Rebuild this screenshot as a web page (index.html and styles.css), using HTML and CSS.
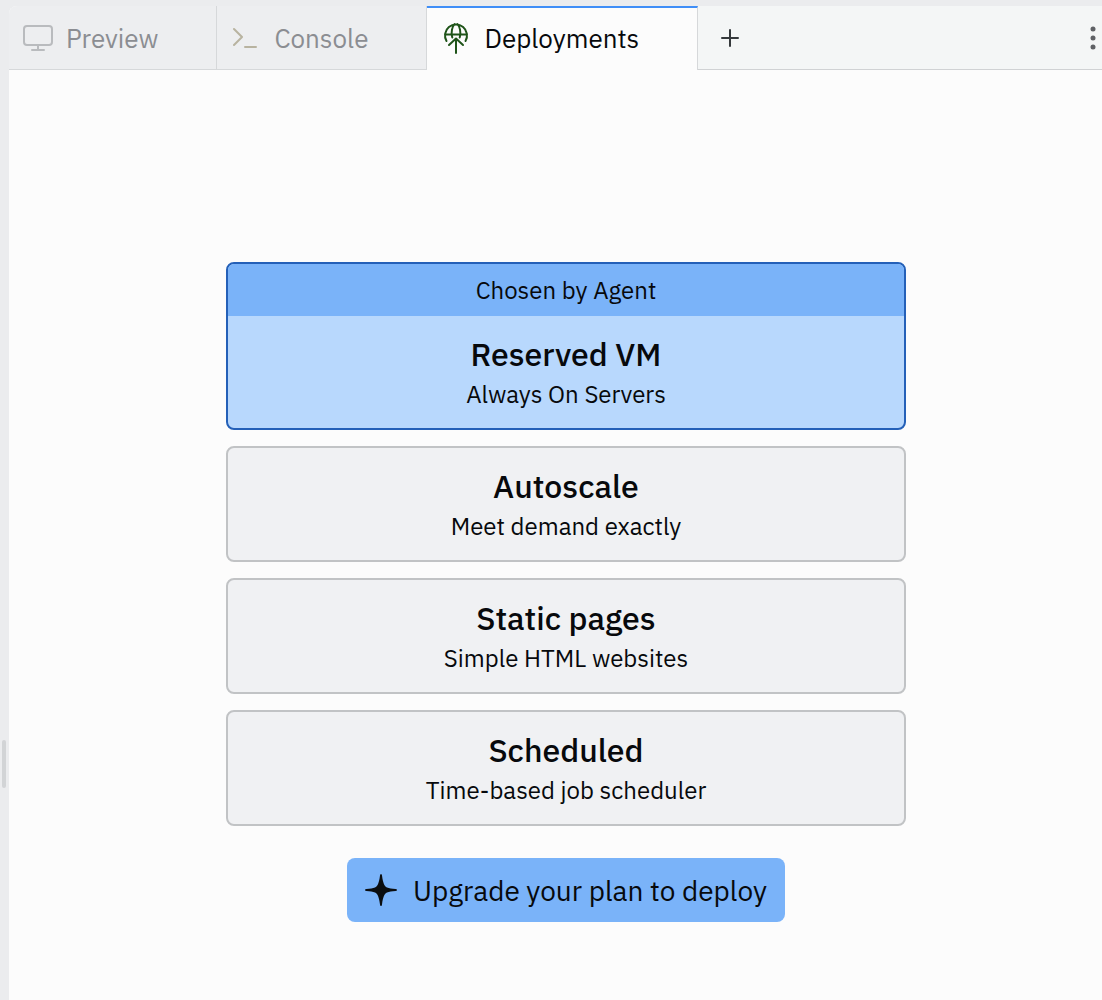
FILE: index.html
```html
<!DOCTYPE html>
<html lang="en">
<head>
<meta charset="utf-8">
<meta name="viewport" content="width=device-width, initial-scale=1">
<title>Deployments</title>
<link rel="stylesheet" href="styles.css">
</head>
<body>
<div class="workspace">
  <div class="resizer"><span class="resizer-grip"></span></div>
  <div class="pane">
    <nav class="tabs" aria-label="Panes">
      <button class="tab tab-preview" type="button">
        <svg class="tab-icon" width="32" height="32" viewBox="0 0 32 32" fill="none" stroke="#b9bbbe" stroke-width="2" stroke-linecap="round" stroke-linejoin="round" aria-hidden="true"><rect x="2" y="4" width="28" height="19" rx="3"/><path d="M16 23v5M10 28h12"/></svg>
        <span>Preview</span>
      </button>
      <button class="tab" type="button">
        <svg class="tab-icon" width="32" height="32" viewBox="0 0 32 32" fill="none" stroke="#b8b3a0" stroke-width="2" stroke-linecap="round" stroke-linejoin="round" aria-hidden="true"><path d="M4 7l8 8-8 8M15 25h11"/></svg>
        <span>Console</span>
      </button>
      <button class="tab tab-active" type="button" aria-current="page">
        <svg class="tab-icon" width="32" height="32" viewBox="0 0 32 32" fill="none" stroke="#1f5419" stroke-width="2" stroke-linecap="round" stroke-linejoin="round" aria-hidden="true"><path d="M6.500 19A11 11 0 1 1 25.500 19M5 12.500h22M12.300 15.500C10.500 10 12.500 4.500 14.500 2M19.700 15.500C21.500 10 19.500 4.500 17.500 2M16 31V17M9 23l7-6.500 7 6.500"/></svg>
        <span>Deployments</span>
      </button>
      <button class="tool" type="button" aria-label="New tab">
        <svg width="20" height="20" viewBox="0 0 20 20" stroke="#35393c" stroke-width="2" stroke-linecap="round" aria-hidden="true"><path d="M2 10h16M10 2v16"/></svg>
      </button>
      <button class="tool tool-more" type="button" aria-label="More options">
        <svg width="6" height="26" viewBox="0 0 6 26" fill="#5f6165" aria-hidden="true"><circle cx="3" cy="4" r="2.500"/><circle cx="3" cy="13" r="2.500"/><circle cx="3" cy="22" r="2.500"/></svg>
      </button>
    </nav>
    <main class="deploy">
      <div class="options">
        <button class="option option-chosen" type="button">
          <span class="badge">Chosen by Agent</span>
          <span class="option-body"><strong class="option-title">Reserved VM</strong><span class="option-text">Always On Servers</span></span>
        </button>
        <button class="option" type="button">
          <span class="option-body"><strong class="option-title">Autoscale</strong><span class="option-text">Meet demand exactly</span></span>
        </button>
        <button class="option" type="button">
          <span class="option-body"><strong class="option-title">Static pages</strong><span class="option-text">Simple HTML websites</span></span>
        </button>
        <button class="option" type="button">
          <span class="option-body"><strong class="option-title">Scheduled</strong><span class="option-text">Time-based job scheduler</span></span>
        </button>
      </div>
      <button class="upgrade" type="button">
        <svg width="32" height="32" viewBox="0 0 32 32" fill="#0a0d10" aria-hidden="true"><path d="M16 0q.900 0 1 1.500C18 9 19.500 12.500 22 13.500C24 14.500 27 14.700 30.500 15q1.500.200 1.500 1t-1.500 1C27 17.300 24 17.500 22 18.500C19.500 19.500 18 23 17 30.500q-.100 1.500-1 1.500t-1-1.500C14 23 12.500 19.500 10 18.500C8 17.500 5 17.300 1.500 17Q0 16.800 0 16t1.500-1C5 14.700 8 14.500 10 13.500C12.500 12.500 14 9 15 1.500Q15.100 0 16 0z"/></svg>
        <span>Upgrade your plan to deploy</span>
      </button>
    </main>
  </div>
</div>
</body>
</html>
```
FILE: styles.css
```css
* {
  box-sizing: border-box;
}

body {
  margin: 0;
  background: #ebecee;
  color: #07090c;
  font-family: "IBM Plex Sans", Roboto, sans-serif;
}

button {
  border: 0;
  padding: 0;
  color: inherit;
  font: inherit;
  cursor: pointer;
}

.workspace {
  display: flex;
  min-height: 100vh;
  padding-top: 6px;
}

.resizer {
  display: flex;
  flex: none;
  width: 9px;
  padding: 522px 2px 0;
  align-items: center;
}

.resizer-grip {
  width: 4px;
  height: 48px;
  border-radius: 2px;
  background: #d2d4d6;
}

.pane {
  display: flex;
  flex: 1;
  flex-direction: column;
  min-width: 0;
  border-top-left-radius: 8px;
  background: #fcfcfc;
  overflow: hidden;
}

.tabs {
  display: flex;
  height: 64px;
  background: #f4f6f6;
}

.tab {
  display: flex;
  align-items: center;
  gap: 12px;
  padding: 0 58px 0 13px;
  border-right: 1px solid #d6d8da;
  border-bottom: 1px solid #d6d8da;
  background: #edeef0;
  color: #8b8d92;
  font-size: 26px;
  white-space: nowrap;
}

.tab-icon {
  flex: none;
}

.tab-active {
  padding-bottom: 3px;
  border-top: 2px solid #3f8ef7;
  border-bottom: 0;
  background: #fcfcfc;
  color: #07090c;
}

.tool {
  display: flex;
  align-items: center;
  padding-left: 22px;
  border-bottom: 1px solid #d0d2d4;
  background: #f4f6f6;
}

.tool-more {
  flex: 1;
  justify-content: flex-end;
  padding-right: 6px;
}

.deploy {
  display: flex;
  flex: 1;
  flex-direction: column;
  align-items: center;
  justify-content: center;
  gap: 32px;
  padding: 114px 16px 0 37px;
  color: #07090c;
}

.options {
  display: flex;
  flex-direction: column;
  gap: 16px;
  width: 100%;
  max-width: 680px;
}

.option {
  border: 2px solid #c1c3c5;
  border-radius: 8px;
  background: #f0f1f3;
  overflow: hidden;
  text-align: center;
}

.option-chosen {
  border-color: #2460b8;
  background: #b8d8fd;
}

.badge {
  display: block;
  background: #7ab3f9;
  font-size: 24px;
  line-height: 52px;
}

.option-body {
  display: flex;
  flex-direction: column;
  padding: 16px;
}

.option-title {
  font-size: 32px;
  font-weight: 500;
  line-height: 44px;
}

.option-text {
  font-size: 24px;
  line-height: 36px;
}

.upgrade {
  display: flex;
  align-items: center;
  gap: 16px;
  height: 64px;
  padding: 0 18px;
  border-radius: 8px;
  background: #7ab3f9;
  font-size: 28px;
}
```
